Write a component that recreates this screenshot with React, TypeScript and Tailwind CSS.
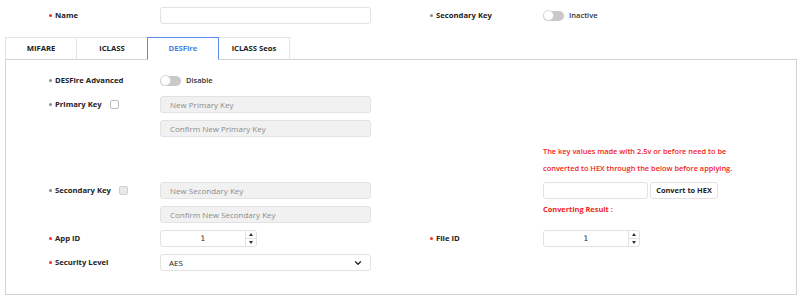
import { ChevronDown } from 'lucide-react';

const font = { fontFamily: '"Open Sans", "Noto Sans", sans-serif' };

function Label({ text, required = false }: { text: string; required?: boolean }) {
  return (
    <div className="flex items-center">
      <span className={`w-[3px] h-[3px] rounded-full mr-[3px] ${required ? 'bg-[#f0302a]' : 'bg-[#8a8a8a]'}`} />
      <span className="text-[7.7px] font-bold text-[#222]">{text}</span>
    </div>
  );
}

function Toggle({ text }: { text: string }) {
  return (
    <div className="flex items-center">
      <div className="relative w-[21px] h-[10px] rounded-full bg-[#c9c9c9]">
        <div className="absolute left-0 top-[-0.5px] w-[11px] h-[11px] rounded-full bg-white border border-[#d4d4d4]" />
      </div>
      <span className="ml-[5px] text-[7.5px] font-semibold text-[#333]">{text}</span>
    </div>
  );
}

function TextBox({ placeholder = '', disabled = false, width = 'w-[211px]' }: { placeholder?: string; disabled?: boolean; width?: string }) {
  return (
    <div
      className={`${width} h-[17px] rounded-[3px] border border-[#e2e2e2] flex items-center pl-[9px] text-[8px] text-[#8c8c8c] ${
        disabled ? 'bg-[#f1f1f1]' : 'bg-white'
      }`}
    >
      {placeholder}
    </div>
  );
}

function NumberBox({ value }: { value: string }) {
  return (
    <div className="w-[97px] h-[17px] rounded-[3px] border border-[#e2e2e2] bg-white flex">
      <div className="flex-1 flex items-center justify-center text-[7.5px] text-[#222]" style={{ fontFamily: '"DejaVu Sans", sans-serif' }}>
        {value}
      </div>
      <div className="w-[11px] border-l border-[#e2e2e2] flex flex-col">
        <div className="flex-1 flex items-center justify-center">
          <div className="w-0 h-0 border-l-[2.5px] border-r-[2.5px] border-b-[3px] border-l-transparent border-r-transparent border-b-[#333]" />
        </div>
        <div className="h-px bg-[#e2e2e2]" />
        <div className="flex-1 flex items-center justify-center">
          <div className="w-0 h-0 border-l-[2.5px] border-r-[2.5px] border-t-[3px] border-l-transparent border-r-transparent border-t-[#333]" />
        </div>
      </div>
    </div>
  );
}

function Row({ left, right }: { left?: React.ReactNode; right?: React.ReactNode }) {
  return (
    <div className="flex min-h-[17px]">
      <div className="w-[424px] pl-[43px] flex">{left}</div>
      <div className="flex-1 flex">{right}</div>
    </div>
  );
}

function Field({ label, width = 'w-[111px]', children }: { label: React.ReactNode; width?: string; children?: React.ReactNode }) {
  return (
    <div className="flex items-center">
      <div className={`${width} flex items-center`}>{label}</div>
      {children}
    </div>
  );
}

const tabs = ['MIFARE', 'iCLASS', 'DESFire', 'iCLASS Seos'];

export default function App() {
  return (
    <div className="w-[800px] h-[300px] bg-white overflow-hidden" style={font}>
      {/* Top row */}
      <div className="flex pt-[7px]">
        <div className="w-[430px] pl-[49px]">
          <Field label={<Label text="Name" required />}>
            <TextBox />
          </Field>
        </div>
        <Field label={<Label text="Secondary Key" />} width="w-[113px]">
          <Toggle text="Inactive" />
        </Field>
      </div>

      {/* Tabs */}
      <div className="flex ml-[5px] mt-[13px] relative z-10 -mb-px">
        {tabs.map((t) => (
          <div
            key={t}
            className={`w-[72px] h-[23px] -mr-px flex items-center justify-center text-[7.7px] font-bold bg-white border ${
              t === 'DESFire'
                ? 'border-[#5a8ee8] border-b-white text-[#4a80e0] relative z-10'
                : 'border-[#e4e4e4] border-b-[#d2d2d2] text-[#222]'
            }`}
          >
            {t}
          </div>
        ))}
      </div>

      {/* Panel */}
      <div className="ml-[5px] w-[792px] border border-[#d2d2d2] pt-[12px] pb-[23px] flex flex-col gap-[7px]">
        <Row
          left={
            <Field label={<Label text="DESFire Advanced" />}>
              <Toggle text="Disable" />
            </Field>
          }
        />
        <Row
          left={
            <Field
              label={
                <>
                  <Label text="Primary Key" />
                  <div className="ml-[8px] w-[9px] h-[9px] rounded-[2px] border border-[#bdbdbd] bg-white" />
                </>
              }
            >
              <TextBox placeholder="New Primary Key" disabled />
            </Field>
          }
        />
        <Row left={<div className="pl-[111px]"><TextBox placeholder="Confirm New Primary Key" disabled /></div>} />
        <Row
          right={
            <div className="pl-[113px] text-[7.4px] font-semibold text-[#f21b1b] leading-[17px] h-[32px] -mt-px">
              <div>The key values made with 2.5v or before need to be</div>
              <div>converted to HEX through the below before applying.</div>
            </div>
          }
        />
        <Row
          left={
            <Field
              label={
                <>
                  <Label text="Secondary Key" />
                  <div className="ml-[8px] w-[9px] h-[9px] rounded-[2px] border border-[#d0d0d0] bg-[#e9e9e9]" />
                </>
              }
            >
              <TextBox placeholder="New Secondary Key" disabled />
            </Field>
          }
          right={
            <div className="pl-[113px] flex items-center">
              <TextBox width="w-[105px]" />
              <div className="ml-[2px] w-[68px] h-[17px] rounded-[3px] border border-[#e2e2e2] bg-white flex items-center justify-center text-[7.4px] font-bold text-[#222]">
                Convert to HEX
              </div>
            </div>
          }
        />
        <Row
          left={<div className="pl-[111px]"><TextBox placeholder="Confirm New Secondary Key" disabled /></div>}
          right={
            <div className="pl-[113px] text-[7.4px] font-bold text-[#f21b1b] leading-[17px] -mt-[5px]">Converting Result :</div>
          }
        />
        <Row
          left={
            <Field label={<Label text="App ID" required />}>
              <NumberBox value="1" />
            </Field>
          }
          right={
            <Field label={<Label text="File ID" required />} width="w-[113px]">
              <NumberBox value="1" />
            </Field>
          }
        />
        <Row
          left={
            <Field label={<Label text="Security Level" required />}>
              <div className="w-[211px] h-[17px] rounded-[3px] border border-[#e2e2e2] bg-white flex items-center justify-between pl-[8px] pr-[7px] text-[8px] text-[#222]">
                <span>AES</span>
                <ChevronDown size={10} strokeWidth={3} className="text-[#222]" />
              </div>
            </Field>
          }
        />
      </div>
    </div>
  );
}
